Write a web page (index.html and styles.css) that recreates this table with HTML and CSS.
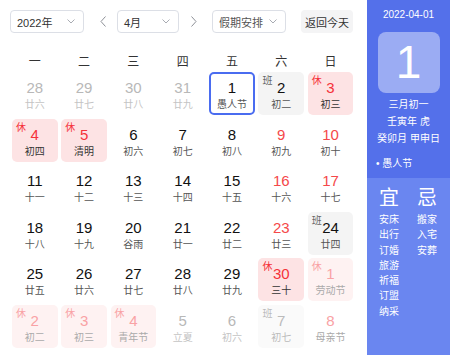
FILE: index.html
```html
<!DOCTYPE html>
<html lang="zh">
<head>
<meta charset="utf-8">
<link rel="stylesheet" href="styles.css">
</head>
<body>
<div class="app">
  <div class="main">
    <div class="toolbar">
      <div class="select sel-year"><span>2022年</span><svg class="chev" viewBox="0 0 8 5" width="8" height="5"><path d="M0.5 0.5l3.5 3.5 3.5-3.5" fill="none" stroke="#a8abb2" stroke-width="1"/></svg></div>
      <div class="arrow arrow-l"><svg viewBox="0 0 6 11" width="6" height="11"><path d="M5.5 0.5L1 5.5l4.5 5" fill="none" stroke="#8c8f96" stroke-width="1"/></svg></div>
      <div class="select sel-month"><span>4月</span><svg class="chev" viewBox="0 0 8 5" width="8" height="5"><path d="M0.5 0.5l3.5 3.5 3.5-3.5" fill="none" stroke="#a8abb2" stroke-width="1"/></svg></div>
      <div class="arrow arrow-r"><svg viewBox="0 0 6 11" width="6" height="11"><path d="M0.5 0.5L5 5.5l-4.5 5" fill="none" stroke="#8c8f96" stroke-width="1"/></svg></div>
      <div class="select sel-hol"><span>假期安排</span><svg class="chev" viewBox="0 0 8 5" width="8" height="5"><path d="M0.5 0.5l3.5 3.5 3.5-3.5" fill="none" stroke="#a8abb2" stroke-width="1"/></svg></div>
      <div class="today-btn">返回今天</div>
    </div>
    <div class="weekdays">
      <div>一</div><div>二</div><div>三</div><div>四</div><div>五</div><div>六</div><div>日</div>
    </div>
    <div class="grid">
      <div class="cell other"><div class="num">28</div><div class="lunar">廿六</div></div>
      <div class="cell other"><div class="num">29</div><div class="lunar">廿七</div></div>
      <div class="cell other"><div class="num">30</div><div class="lunar">廿八</div></div>
      <div class="cell other"><div class="num">31</div><div class="lunar">廿九</div></div>
      <div class="cell selected"><div class="num">1</div><div class="lunar">愚人节</div></div>
      <div class="cell work"><span class="tag">班</span><div class="num">2</div><div class="lunar">初二</div></div>
      <div class="cell rest"><span class="tag">休</span><div class="num">3</div><div class="lunar">初三</div></div>

      <div class="cell rest"><span class="tag">休</span><div class="num">4</div><div class="lunar">初四</div></div>
      <div class="cell rest"><span class="tag">休</span><div class="num">5</div><div class="lunar">清明</div></div>
      <div class="cell"><div class="num">6</div><div class="lunar">初六</div></div>
      <div class="cell"><div class="num">7</div><div class="lunar">初七</div></div>
      <div class="cell"><div class="num">8</div><div class="lunar">初八</div></div>
      <div class="cell weekend"><div class="num">9</div><div class="lunar">初九</div></div>
      <div class="cell weekend"><div class="num">10</div><div class="lunar">初十</div></div>

      <div class="cell"><div class="num">11</div><div class="lunar">十一</div></div>
      <div class="cell"><div class="num">12</div><div class="lunar">十二</div></div>
      <div class="cell"><div class="num">13</div><div class="lunar">十三</div></div>
      <div class="cell"><div class="num">14</div><div class="lunar">十四</div></div>
      <div class="cell"><div class="num">15</div><div class="lunar">十五</div></div>
      <div class="cell weekend"><div class="num">16</div><div class="lunar">十六</div></div>
      <div class="cell weekend"><div class="num">17</div><div class="lunar">十七</div></div>

      <div class="cell"><div class="num">18</div><div class="lunar">十八</div></div>
      <div class="cell"><div class="num">19</div><div class="lunar">十九</div></div>
      <div class="cell"><div class="num">20</div><div class="lunar">谷雨</div></div>
      <div class="cell"><div class="num">21</div><div class="lunar">廿一</div></div>
      <div class="cell"><div class="num">22</div><div class="lunar">廿二</div></div>
      <div class="cell weekend"><div class="num">23</div><div class="lunar">廿三</div></div>
      <div class="cell work"><span class="tag">班</span><div class="num">24</div><div class="lunar">廿四</div></div>

      <div class="cell"><div class="num">25</div><div class="lunar">廿五</div></div>
      <div class="cell"><div class="num">26</div><div class="lunar">廿六</div></div>
      <div class="cell"><div class="num">27</div><div class="lunar">廿七</div></div>
      <div class="cell"><div class="num">28</div><div class="lunar">廿八</div></div>
      <div class="cell"><div class="num">29</div><div class="lunar">廿九</div></div>
      <div class="cell rest"><span class="tag">休</span><div class="num">30</div><div class="lunar">三十</div></div>
      <div class="cell rest faded"><span class="tag">休</span><div class="num">1</div><div class="lunar">劳动节</div></div>

      <div class="cell rest faded"><span class="tag">休</span><div class="num">2</div><div class="lunar">初二</div></div>
      <div class="cell rest faded"><span class="tag">休</span><div class="num">3</div><div class="lunar">初三</div></div>
      <div class="cell rest faded"><span class="tag">休</span><div class="num">4</div><div class="lunar">青年节</div></div>
      <div class="cell other"><div class="num">5</div><div class="lunar">立夏</div></div>
      <div class="cell other"><div class="num">6</div><div class="lunar">初六</div></div>
      <div class="cell work faded"><span class="tag">班</span><div class="num">7</div><div class="lunar">初七</div></div>
      <div class="cell weekend faded"><div class="num">8</div><div class="lunar">母亲节</div></div>
    </div>
  </div>
  <aside class="side">
    <div class="side-top">
      <div class="side-date">2022-04-01</div>
      <div class="big-day">1</div>
      <div class="side-lines">
        <div class="side-line">三月初一</div>
        <div class="side-line">壬寅年 虎</div>
        <div class="side-line">癸卯月 甲申日</div>
      </div>
      <div class="side-fest">• 愚人节</div>
    </div>
    <div class="side-bottom">
      <div class="col">
        <div class="col-head">宜</div>
        <div class="item">安床</div>
        <div class="item">出行</div>
        <div class="item">订婚</div>
        <div class="item">旅游</div>
        <div class="item">祈福</div>
        <div class="item">订盟</div>
        <div class="item">纳采</div>
      </div>
      <div class="col">
        <div class="col-head">忌</div>
        <div class="item">搬家</div>
        <div class="item">入宅</div>
        <div class="item">安葬</div>
      </div>
    </div>
  </aside>
</div>
</body>
</html>
```

FILE: styles.css
```css
* { box-sizing: border-box; }
html, body { margin: 0; padding: 0; background: #fff; }
body {
  font-family: "Liberation Sans", "Noto Sans CJK SC", sans-serif;
  color: #1f1f1f;
  width: 450px;
  height: 355px;
  overflow: hidden;
}
.app { display: flex; height: 355px; }
.main { width: 367px; padding: 10px 0 0 10px; }

.toolbar { display: flex; align-items: center; height: 23px; }
.select {
  display: flex;
  align-items: center;
  justify-content: space-between;
  height: 23px;
  border: 1px solid #dcdfe6;
  border-radius: 4px;
  padding: 0 8px 0 6px;
  font-size: 11px;
  color: #333;
}
.sel-year { width: 74px; }
.sel-month { width: 62px; }
.sel-hol { width: 74px; color: #555; }
.chev { display: block; }
.arrow { width: 33px; height: 23px; display: flex; align-items: center; justify-content: center; }
.arrow-l { padding-left: 4px; }
.arrow-r { padding-right: 3px; }
.today-btn {
  margin-left: 15px;
  width: 52px;
  height: 23px;
  background: #f4f4f5;
  border-radius: 4px;
  font-size: 11px;
  color: #333;
  display: flex;
  align-items: center;
  justify-content: center;
}

.weekdays {
  display: grid;
  grid-template-columns: repeat(7, 45.5px);
  column-gap: 3.8px;
  margin: 17px 0 0 2px;
  height: 20px;
  align-items: center;
  font-size: 12px;
  color: #333;
  text-align: center;
}
.grid {
  display: grid;
  grid-template-columns: repeat(7, 45.5px);
  grid-auto-rows: 43px;
  column-gap: 3.8px;
  row-gap: 3.5px;
  margin: 2px 0 0 2px;
}
.cell {
  position: relative;
  border-radius: 5px;
  text-align: center;
  padding-top: 7px;
}
.num { font-size: 15px; line-height: 17px; color: #111; }
.lunar { font-size: 10px; line-height: 14px; margin-top: 2px; color: #555; }
.tag { position: absolute; top: 2px; left: 4px; font-size: 10px; line-height: 13px; }

.other .num { color: #b8b8b8; }
.other .lunar { color: #c4c4c4; }
.weekend .num { color: #f5484a; }
.rest { background: #fde3e4; }
.rest .num { color: #f5323a; }
.rest .tag { color: #f5323a; }
.rest .lunar { color: #333; }
.work { background: #f4f4f4; }
.work .tag { color: #666; }
.selected { border: 2px solid #4a6cf0; padding-top: 5px; }
.faded.rest { background: #fef2f2; }
.faded.rest .num, .faded.rest .tag { color: #f9a2a5; }
.faded.rest .lunar { color: #aaa; }
.faded.work { background: #fafafa; }
.faded.work .num, .faded.work .lunar, .faded.work .tag { color: #bbb; }
.faded.weekend .num { color: #f9a2a5; }
.faded.weekend .lunar { color: #aaa; }

.side { width: 83px; display: flex; flex-direction: column; color: #fff; }
.side-top {
  background: #5470ea;
  height: 178px;
  padding-top: 8px;
  text-align: center;
}
.side-date { font-size: 10px; line-height: 13px; }
.big-day {
  margin: 11px auto 0;
  width: 62px;
  height: 61px;
  border-radius: 8px;
  background: rgba(255, 255, 255, 0.42);
  font-size: 46px;
  line-height: 61px;
}
.side-lines { margin-top: 3px; }
.side-line { font-size: 10px; line-height: 17px; }
.side-fest { text-align: left; padding-left: 9px; font-size: 10px; line-height: 14px; margin-top: 10px; }
.side-bottom {
  flex: 1;
  background: #6a86f0;
  display: flex;
  padding: 8px 0 0 12px;
  gap: 18px;
}
.col { display: flex; flex-direction: column; }
.col-head { font-size: 20px; line-height: 24px; margin-bottom: 2px; }
.item { font-size: 10px; line-height: 15.3px; }
```
